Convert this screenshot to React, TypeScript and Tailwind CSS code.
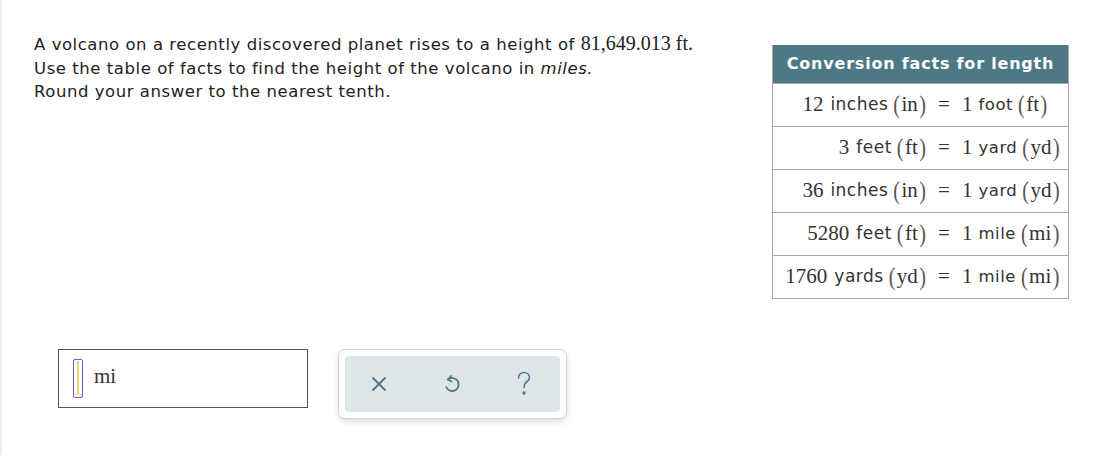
import React from "react";

const sans = "font-['DejaVu_Sans','Liberation_Sans',sans-serif]";
const serif = "font-['Liberation_Serif','DejaVu_Serif',serif]";

// math-looking pieces of the table rows
function M({ children }: { children: React.ReactNode }) {
  return <span className={`${serif} text-[21px]`}>{children}</span>;
}

function Unit({ u }: { u: string }) {
  return (
    <span className={`${serif} flex items-center text-[21px] text-[#333]`}>
      <span className="inline-block -translate-y-[1px] scale-y-[1.3] text-[20px] text-[#555]">(</span>
      <span className="mx-[1.5px]">{u}</span>
      <span className="inline-block -translate-y-[1px] scale-y-[1.3] text-[20px] text-[#555]">)</span>
    </span>
  );
}

const rows: [string, string, string, string, string, string][] = [
  ["12", "inches", "in", "1", "foot", "ft"],
  ["3", "feet", "ft", "1", "yard", "yd"],
  ["36", "inches", "in", "1", "yard", "yd"],
  ["5280", "feet", "ft", "1", "mile", "mi"],
  ["1760", "yards", "yd", "1", "mile", "mi"],
];

function FactRow({ r }: { r: (typeof rows)[number] }) {
  return (
    <div className="grid h-[43px] grid-cols-[153px_36px_1fr] items-center border-t border-[#a9a9a9] text-[#333]">
      <div className="flex items-center justify-end">
        <M>{r[0]}</M>
        <span className={`${sans} ml-[7px] mr-[5px] text-[17px] tracking-[0.5px]`}>{r[1]}</span>
        <Unit u={r[2]} />
      </div>
      <span className={`${serif} text-center text-[21px]`}>=</span>
      <div className="flex items-center">
        <M>{r[3]}</M>
        <span className={`${sans} ml-[6px] mr-[5px] text-[16.5px] tracking-[0.5px]`}>{r[4]}</span>
        <Unit u={r[5]} />
      </div>
    </div>
  );
}

function UndoIcon() {
  return (
    <svg width="20" height="22" viewBox="0 0 20 22" fill="none" stroke="#4e7683" strokeWidth="1.8" strokeLinecap="round" strokeLinejoin="round">
      <path d="M6 6.5 A6.5 6.5 0 1 1 4.2 14" />
      <path d="M9 3 L6 6.5 L9.5 8.5" />
    </svg>
  );
}

function HelpIcon() {
  return (
    <svg width="16" height="26" viewBox="0 0 16 26" fill="none" stroke="#4e7683" strokeWidth="1.6" strokeLinecap="round">
      <path d="M2.5 7 C2.5 3.5 5 1.5 8 1.5 C11 1.5 13.5 3.5 13.5 6.5 C13.5 9.5 11 10.5 9.5 11.8 C8.3 12.8 8 14 8 16.5" />
      <circle cx="8" cy="22" r="0.9" fill="#4e7683" />
    </svg>
  );
}

export default function App() {
  return (
    <div className="h-[455px] w-[1115px] bg-white">
      <div className="flex h-full border-l-2 border-[#ececec]">
        <div className="flex w-[770px] flex-col pl-[32px] pt-[32px]">
          <div className={`${sans} text-[16.5px] leading-[23.5px] tracking-[0.55px] text-[#222]`}>
            <p>
              A volcano on a recently discovered planet rises to a height of{" "}
              <span className={`${serif} text-[20px] tracking-normal`}>81,649.013 ft.</span>
            </p>
            <p>
              Use the table of facts to find the height of the volcano in <i>miles.</i>
            </p>
            <p>Round your answer to the nearest tenth.</p>
          </div>

          <div className="mt-[245px] flex items-start">
            <div className="ml-[24px] flex h-[59px] w-[250px] items-center border border-[#555] pl-[14px]">
              <div className="relative flex h-[39px] w-[10px] items-center justify-center rounded-[2px] border border-[#6a5ad8]">
                <div className="h-[34px] w-[2px] bg-[#e8d86a]" />
              </div>
              <span className={`${serif} ml-[11px] pb-[2px] text-[21px] text-[#333]`}>mi</span>
            </div>

            <div className="ml-[30px] rounded-[7px] border border-[#cfd4d6] bg-white p-[6px] shadow-[0_3px_6px_rgba(0,0,0,0.12)]">
              <div className="flex h-[56px] w-[215px] items-center gap-[54px] rounded-[4px] bg-[#dfe6e9] pl-[25px]">
                <svg width="18" height="18" viewBox="0 0 18 18" stroke="#4e7683" strokeWidth="1.8" strokeLinecap="round">
                  <path d="M3 3 L15 15 M15 3 L3 15" />
                </svg>
                <UndoIcon />
                <HelpIcon />
              </div>
            </div>
          </div>
        </div>

        <div className="pt-[45px]">
          <div className="w-[297px] border border-t-0 border-[#a9a9a9]">
            <div className={`${sans} flex h-[38px] items-center justify-center bg-[#4d7985] text-[16px] font-bold tracking-[0.8px] text-white`}>
              Conversion facts for length
            </div>
            {rows.map((r, i) => (
              <FactRow key={i} r={r} />
            ))}
          </div>
        </div>
      </div>
    </div>
  );
}
